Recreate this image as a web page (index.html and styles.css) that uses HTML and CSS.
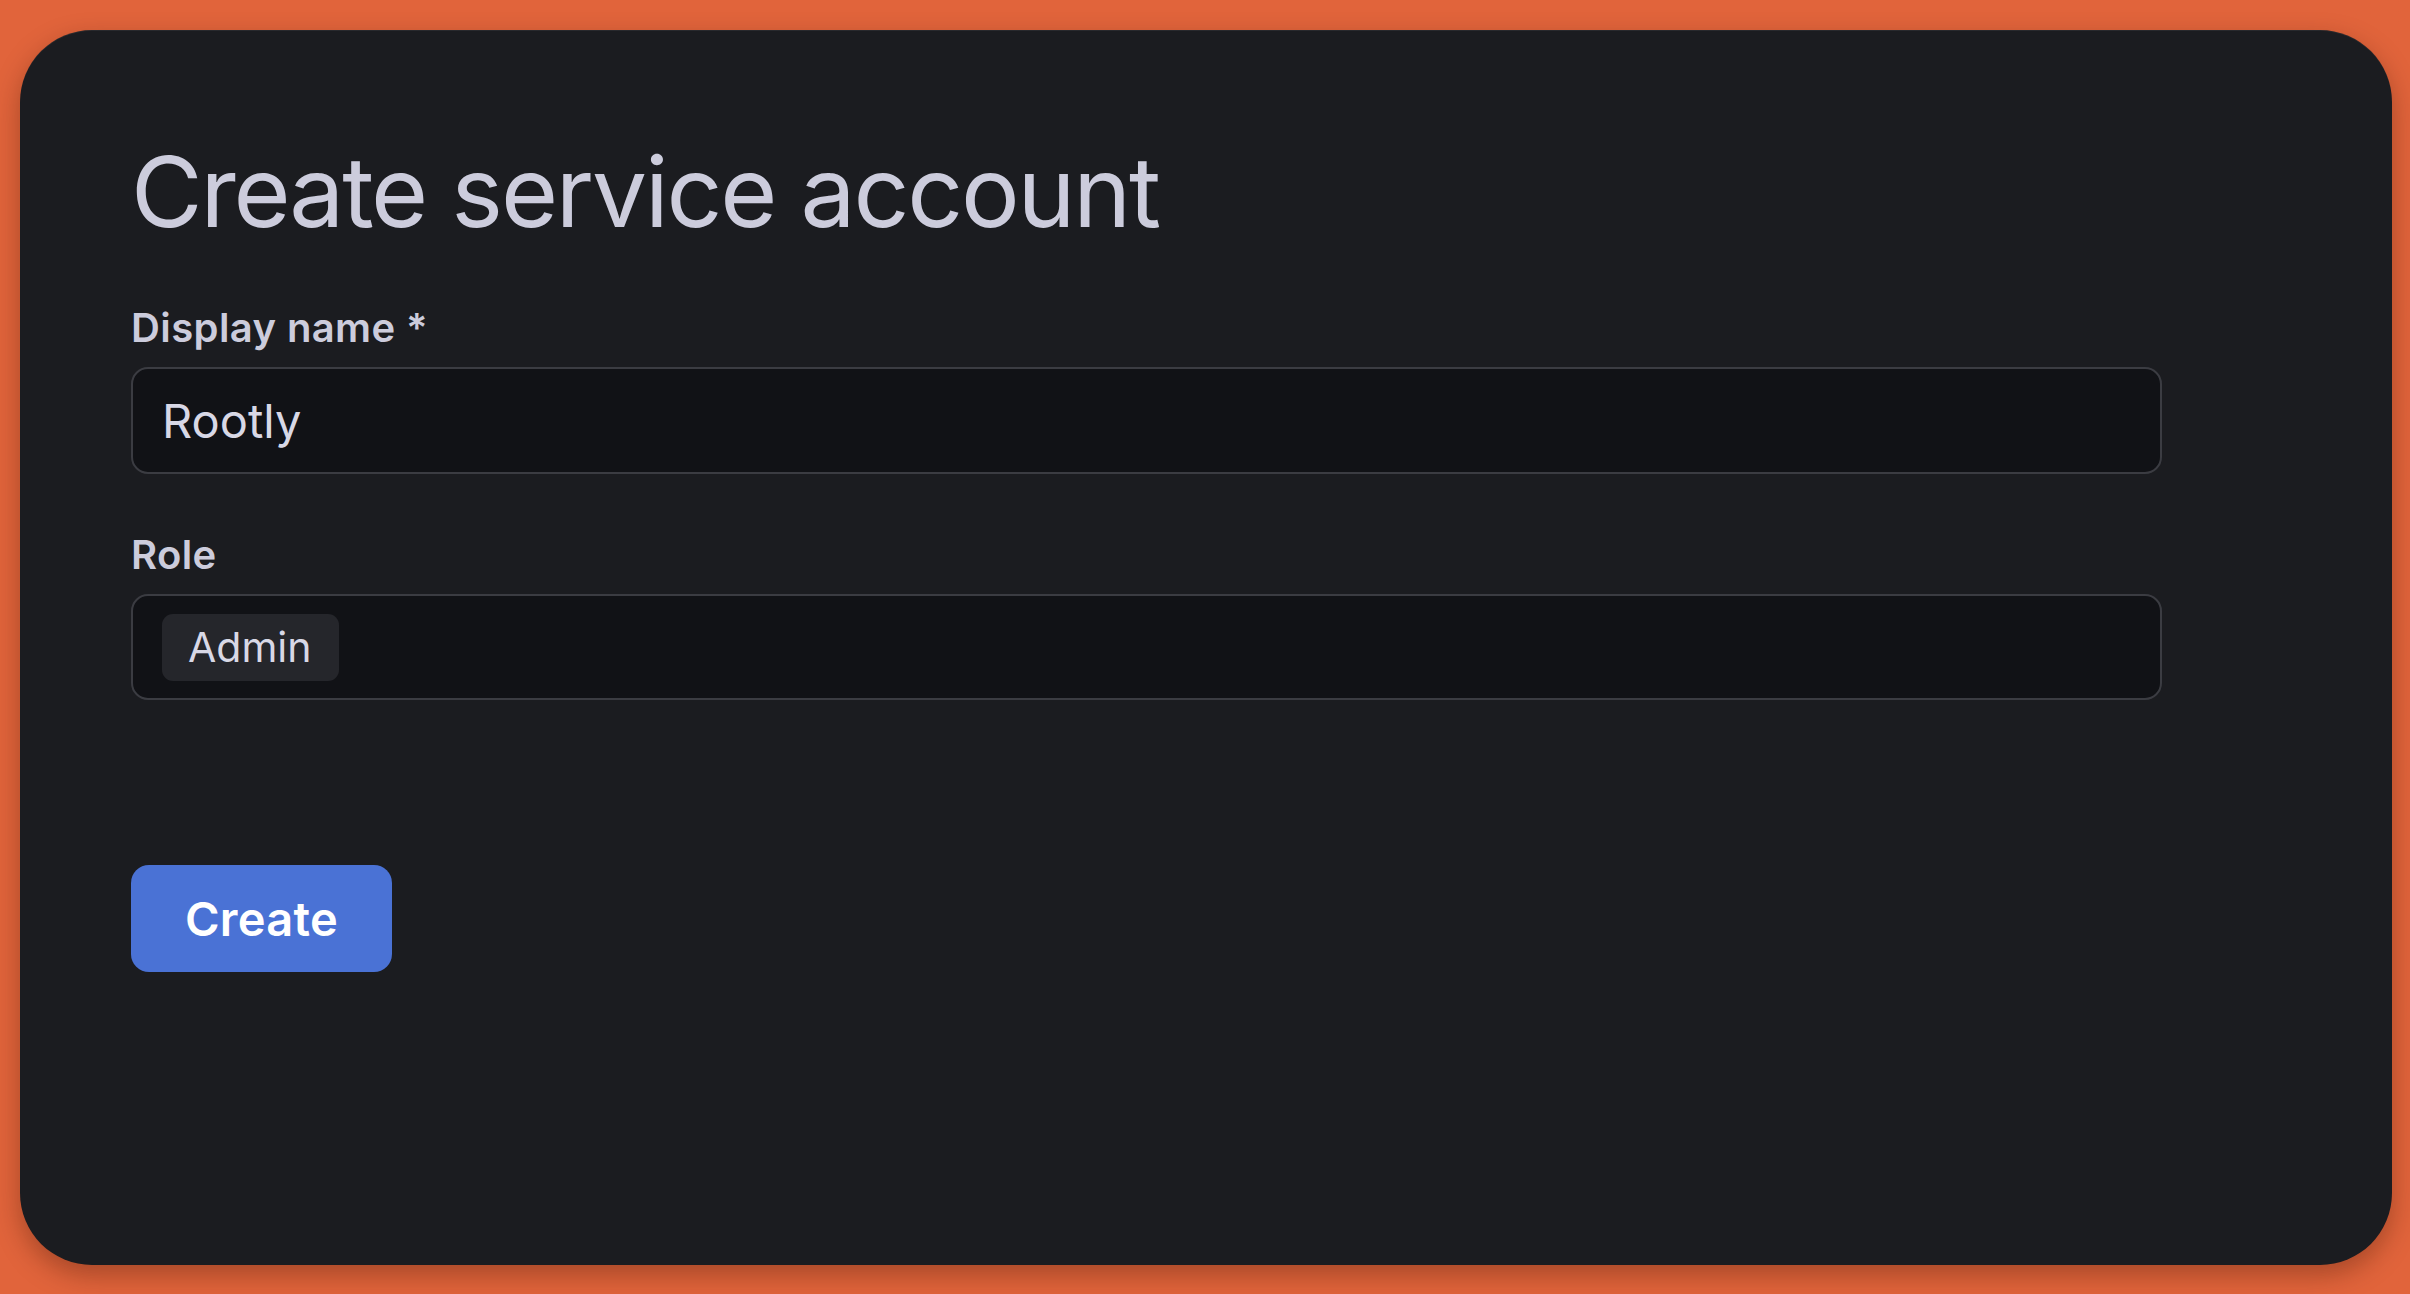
FILE: index.html
```html
<!DOCTYPE html>
<html lang="en">
<head>
<meta charset="utf-8">
<title>Create service account</title>
<link rel="stylesheet" href="styles.css">
</head>
<body>
  <main class="card">
    <h1 class="title">Create service account</h1>
    <form class="form">
      <div class="field">
        <label class="label" for="name">Display name *</label>
        <div class="input">
          <span class="input-value">Rootly</span>
        </div>
      </div>
      <div class="field field-role">
        <label class="label">Role</label>
        <div class="input input-role">
          <span class="chip">Admin</span>
        </div>
      </div>
      <div class="actions">
        <button type="button" class="btn-primary">Create</button>
      </div>
    </form>
  </main>
</body>
</html>
```

FILE: styles.css
```css
* { box-sizing: border-box; }

html, body {
  margin: 0;
  height: 100%;
}

body {
  background: #e1643b;
  padding: 30px 18px 29px 20px;
  display: flex;
  font-family: Inter, "Noto Sans", sans-serif;
  color: #ccccdc;
}

.card {
  flex: 1;
  background: #1b1c20;
  border-radius: 72px;
  box-shadow: 0 10px 26px rgba(60, 20, 5, 0.35), inset 0 1px 0 rgba(255,255,255,0.06);
  padding: 103px 112px 0 111px;
}

.title {
  margin: 0;
  font-size: 98px;
  font-weight: 400;
  line-height: 118px;
  letter-spacing: -2.2px;
  color: #ccccdc;
}

.form {
  margin-top: 54px;
  width: 2031px;
  display: flex;
  flex-direction: column;
}

.field {
  display: flex;
  flex-direction: column;
  gap: 16px;
}

.field-role {
  margin-top: 58px;
}

.label {
  font-size: 40px;
  font-weight: 600;
  line-height: 46px;
  letter-spacing: 0.4px;
  color: #ccccdc;
}

.input {
  height: 107px;
  background: #111216;
  border: 2px solid #3b3c42;
  border-radius: 17px;
  display: flex;
  align-items: center;
  padding: 0 29px;
}

.input-role {
  height: 106px;
}

.input-value {
  font-size: 47px;
  color: #d8d8e6;
}

.chip {
  height: 67px;
  display: flex;
  align-items: center;
  padding: 0 28px 0 26px;
  background: #25262b;
  border-radius: 11px;
  font-size: 41px;
  color: #d8d8e6;
}

.actions {
  margin-top: 165px;
}

.btn-primary {
  width: 261px;
  height: 107px;
  border: none;
  border-radius: 18px;
  background: #4a72d5;
  color: #ffffff;
  font-family: Inter, "Noto Sans", sans-serif;
  font-size: 47px;
  font-weight: 600;
  letter-spacing: 0.3px;
  padding: 0;
}
```
